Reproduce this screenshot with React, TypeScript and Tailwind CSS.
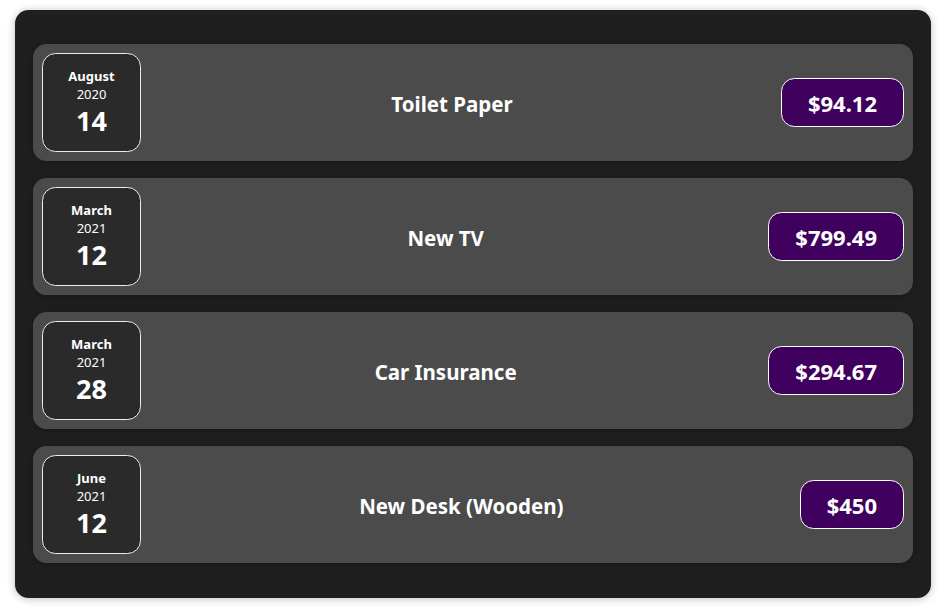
const expenses = [
  { id: "e1", title: "Toilet Paper", amount: "$94.12", month: "August", year: "2020", day: "14" },
  { id: "e2", title: "New TV", amount: "$799.49", month: "March", year: "2021", day: "12" },
  { id: "e3", title: "Car Insurance", amount: "$294.67", month: "March", year: "2021", day: "28" },
  { id: "e4", title: "New Desk (Wooden)", amount: "$450", month: "June", year: "2021", day: "12" },
];

function ExpenseDate({ month, year, day }: { month: string; year: string; day: string }) {
  return (
    <div className="flex h-[99px] w-[99px] shrink-0 flex-col items-center justify-center rounded-[13.5px] border border-[#ececec] bg-[#2a2a2a] pt-[1px] text-white">
      <div className="text-[13px] font-bold leading-[18px]">{month}</div>
      <div className="text-[13px] leading-[18px]">{year}</div>
      <div className="text-[27px] font-bold leading-[36px]">{day}</div>
    </div>
  );
}

export default function App() {
  return (
    <div className="min-h-[608px] bg-white pt-[10px] font-['Noto_Sans',sans-serif]">
      <div className="ml-[15px] flex w-[916px] flex-col gap-[17px] rounded-[13.5px] bg-[#1f1f1f] px-[18px] pb-[35px] pt-[34px] shadow-[0_1px_8px_rgba(0,0,0,0.25)]">
        {expenses.map((item) => (
          <div
            key={item.id}
            className="flex items-center rounded-[13.5px] bg-[#4b4b4b] p-[9px] shadow-[0_1px_8px_rgba(0,0,0,0.25)]"
          >
            <ExpenseDate month={item.month} year={item.year} day={item.day} />
            <div className="flex flex-1 items-center gap-[18px]">
              <h2 className="mx-[18px] flex-1 pt-[3px] text-center text-[20.5px] font-bold text-white">{item.title}</h2>
              <div className="rounded-[13.5px] border border-white bg-[#40005d] px-[26px] pb-[9px] pt-[10px] text-[22px] font-bold leading-[28px] text-white">
                {item.amount}
              </div>
            </div>
          </div>
        ))}
      </div>
    </div>
  );
}
